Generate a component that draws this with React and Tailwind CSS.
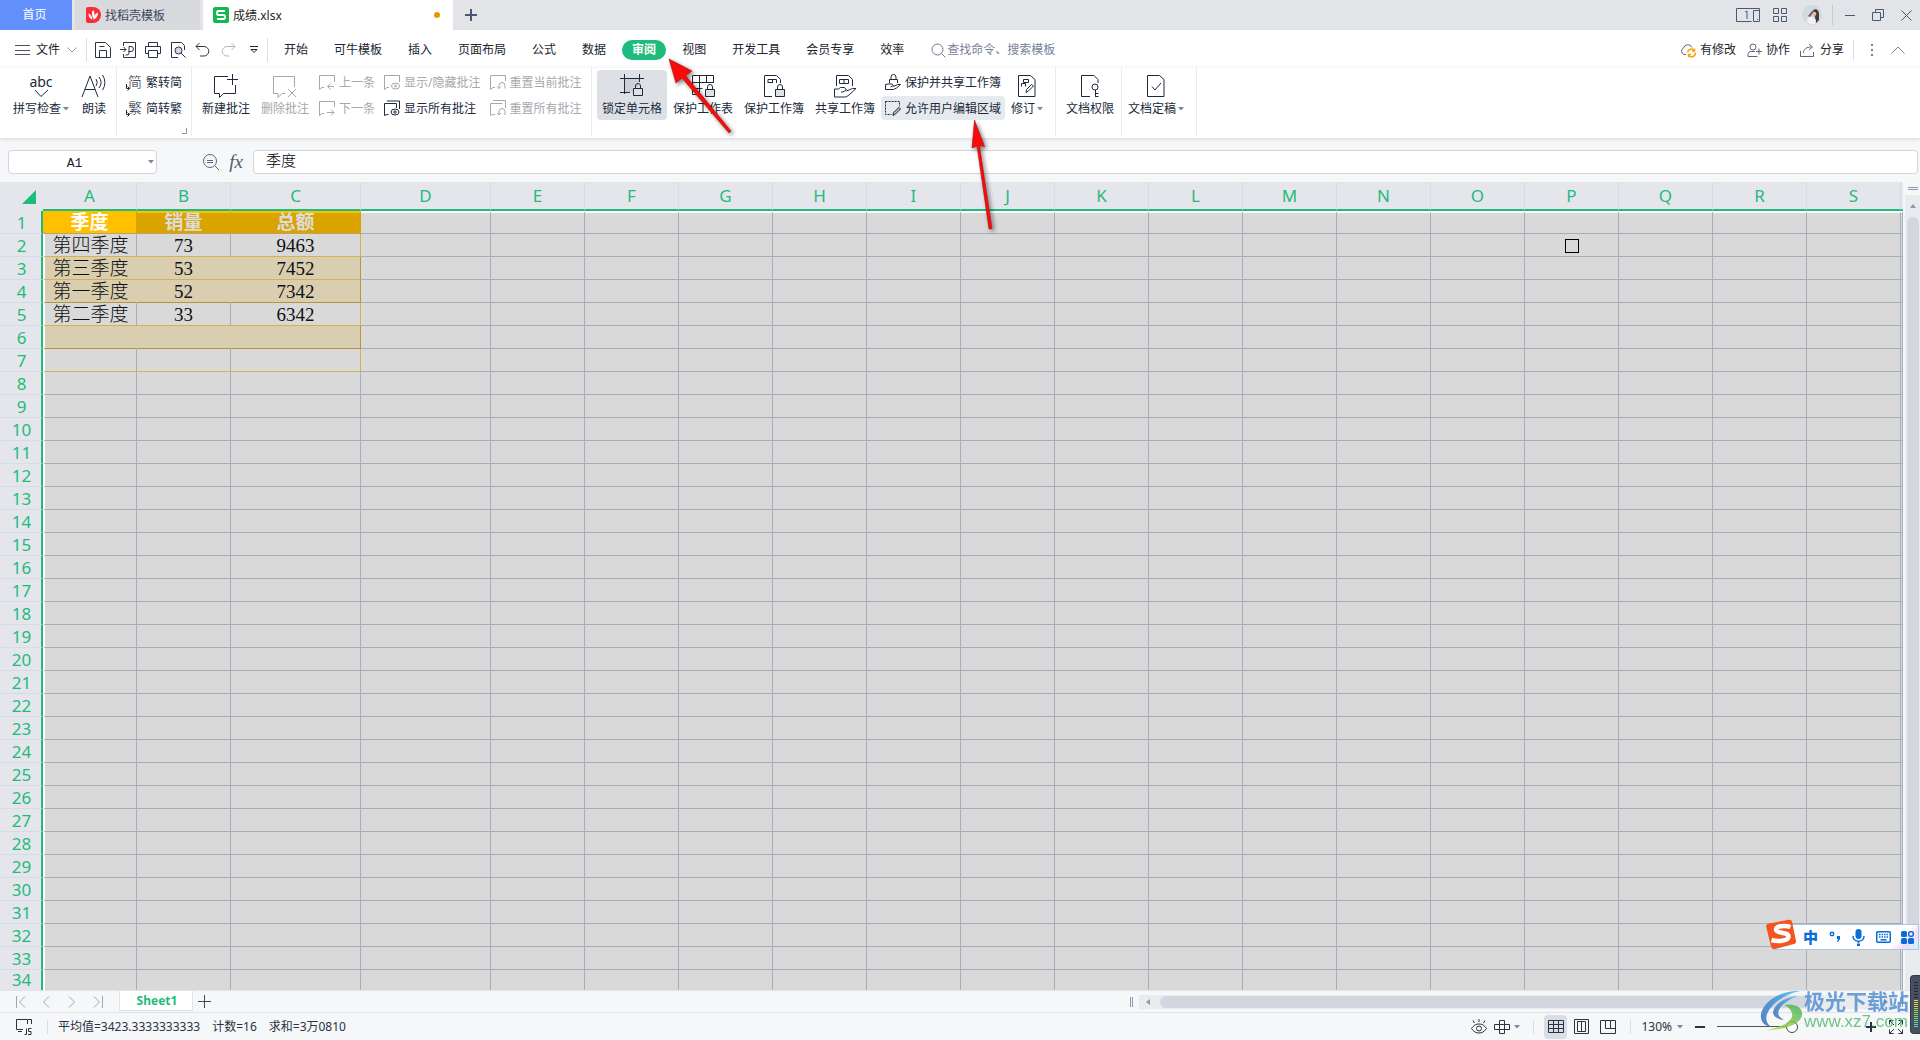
import React from "react";

const UI = "font-['Noto_Sans','Noto_Sans_CJK_SC',sans-serif]";

function Icon({ w = 16, h = w, sw = 1, className = "", children }) {
  return (
    <svg width={w} height={h} viewBox={`0 0 ${w} ${h}`} fill="none" stroke="currentColor" strokeWidth={sw} className={`shrink-0 ${className}`} aria-hidden="true">
      {children}
    </svg>
  );
}

function Caret() {
  return (
    <svg width="6" height="4" viewBox="0 0 6 4" className="shrink-0 fill-[#7b86a0]" aria-hidden="true">
      <path d="M0 0h6L3 3.5z" />
    </svg>
  );
}

/* ---------- title bar ---------- */

function TitleBar() {
  return (
    <header className="flex h-[30px] shrink-0 items-stretch bg-[#e2e4e8] text-xs text-[#3d4760]">
      <button className="mr-[3px] w-[72px] bg-[#618ffb] pr-[3px] text-white">首页</button>
      <button className="mr-[3px] flex w-[125px] items-center gap-1 bg-[#d8dadd] pl-[11px]">
        <svg width="15" height="16" viewBox="0 0 15 16" aria-hidden="true">
          <path d="M2 0h5a8 8 0 0 1 0 16H2a2 2 0 0 1-2-2V2a2 2 0 0 1 2-2z" fill="#f92c3a" />
          <path d="M7 3c2 2 2 5 .3 8.500C5.500 8.500 5.500 5 7 3zM2.500 6.500c2 .5 3.500 2.500 4 6C4 12 2.500 9.500 2.500 6.500zM12 5.500c0 3-1.300 6-4.600 7 .1-3 2-6 4.600-7z" fill="#fff" />
        </svg>
        <span className="pt-0.5">找稻壳模板</span>
      </button>
      <button className="flex w-[250px] items-center gap-1 bg-white pl-[10px] pr-[13px] text-[#1a1d24]">
        <svg width="16" height="16" viewBox="0 0 16 16" aria-hidden="true">
          <rect width="16" height="16" rx="2" fill="#12b84e" />
          <path d="M12 4H5.500C4.300 4 4 4.800 4 6s.5 1.900 1.500 1.900h5c1.100 0 1.500.7 1.500 1.900s-.5 2.200-1.500 2.200H4" fill="none" stroke="#fff" strokeWidth="2" />
        </svg>
        <span className="pt-0.5">成绩.xlsx</span>
        <span className="ml-auto size-[6px] rounded-full bg-[#e79a00]" />
      </button>
      <button aria-label="新建标签" className="flex w-9 items-center justify-center text-[#4a5878]">
        <Icon w={12} sw={2}><path d="M6 0v12M0 6h12" /></Icon>
      </button>
      <div className="ml-auto flex items-center text-[#4a5878]">
        <button aria-label="窗口" className="mr-[13px]">
          <Icon w={24} h={14} sw={1}>
            <path d="M15.500 13.500H.5V.5h23v2M23.500 2.500h-6v11h6zM9 4l2-1v8M21 11.500h1" />
          </Icon>
        </button>
        <button aria-label="应用" className="mr-[15px]">
          <Icon w={14}><path d="M.5.5h5v5h-5zM8.500.5h5v5h-5zM.5 8.500h5v5h-5zM8.500 8.500h5v5h-5z" /></Icon>
        </button>
        <button aria-label="账户" className="mr-[10px]">
          <svg width="20" height="20" viewBox="0 0 20 20" aria-hidden="true">
            <circle cx="10" cy="10" r="10" fill="#cfdbe1" />
            <path d="M11 5c3-2 6 0 6 4l0 6-3 3-1-6z" fill="#4b363c" />
            <path d="M11 7c2-1 4 0 3 3l-2 2-2-2z" fill="#e3b7a4" />
            <path d="M5 17c0-4 2-6 5-5l4 3-1 4-5 0z" fill="#eef4f6" />
            <path d="M6 11l4-5 2 0-4 6z" fill="#6d5a60" />
          </svg>
        </button>
        <span className="mr-[12px] h-5 w-px bg-[#c6c9d0]" />
        <button aria-label="最小化" className="mr-[17px]"><Icon w={10} h={12}><path d="M0 6.500h10" /></Icon></button>
        <button aria-label="还原" className="mr-[17px]"><Icon w={12}><path d="M.5 3.500h8v8h-8zM3.500 3.500v-3h8v8h-3" /></Icon></button>
        <button aria-label="关闭" className="mr-[8px]"><Icon w={11}><path d="M.5.5l10 10M10.500.5l-10 10" /></Icon></button>
      </div>
    </header>
  );
}

/* ---------- menu row ---------- */

const MENUS = ["开始", "可牛模板", "插入", "页面布局", "公式", "数据", "审阅", "视图", "开发工具", "会员专享", "效率"];

function MenuRow() {
  return (
    <nav className="flex h-[38px] shrink-0 items-center bg-white pt-0.5 text-xs text-[#20242e]">
      <button className="ml-[15px] flex items-center text-[#20242e]">
        <Icon w={15} h={10} className="mr-[6px] text-[#4b5261]"><path d="M0 .5h15M0 5.500h15M0 9.500h15" /></Icon>
        文件
        <Icon w={10} h={6} className="ml-[7px] text-[#989dab]"><path d="M.5.5l4.500 4.500L9.500.5" /></Icon>
      </button>
      <span className="ml-[9px] h-6 w-px bg-[#dcdee3]" />
      <div className="ml-[8px] flex items-center gap-[9px] text-[#2a3346]">
        <button aria-label="保存"><Icon><path d="M.5 15.500V.5h10l5 5v10zM4.500 15v-6.500h7V15M4.500 4.500h5" /></Icon></button>
        <button aria-label="输出为PDF"><Icon><path d="M3.500 4V.5h12v15h-12V12M0 7.500h6M3.500 5L6 7.500 3.500 10M9 4.500h2a2 2 0 0 1 0 5H8.500M9 4.500V11a2 2 0 0 1-2 2H5.500" /></Icon></button>
        <button aria-label="打印"><Icon><path d="M3.500 4.500v-4h9v4M3.500 11.500h-3v-7h15v7h-3M3.500 8.500h9v7h-9z" /></Icon></button>
        <button aria-label="打印预览"><Icon><path d="M8 15.500H1.500V.5h10l3 3V8" /><circle cx="8.500" cy="8.500" r="3.500" fill="#d5d9e2" /><path d="M11 11l4.500 4.500" /></Icon></button>
        <button aria-label="撤消"><Icon><path d="M4.500 1L1 4.500 4.500 8M1 4.500h8a4.700 4.700 0 0 1 0 9.500H5" /></Icon></button>
        <button aria-label="恢复" className="text-[#b3b7c0]"><Icon><path d="M11.500 1L15 4.500 11.500 8M15 4.500H7A4.700 4.700 0 0 0 7 14h2" /></Icon></button>
      </div>
      <button aria-label="更多" className="ml-[14px]"><Icon w={8} h={8}><path d="M0 .5h8M1 3.500h6L4 6.500z" /></Icon></button>
      <span className="ml-[9px] h-6 w-px bg-[#dcdee3]" />
      <div className="ml-[3px] flex items-center">
        {MENUS.map((m) => (
          <button
            key={m}
            className={
              m === "审阅"
                ? "mx-[3px] h-5 rounded-full bg-[#1fbb7d] px-[10px] font-bold text-white"
                : "mx-[3px] h-5 px-[10px]"
            }
          >
            {m}
          </button>
        ))}
      </div>
      <label className="ml-[14px] flex items-center gap-px text-[#6f7a94]">
        <Icon w={15}><circle cx="6.500" cy="6.500" r="5.500" /><path d="M10.500 10.500l4 4" /></Icon>
        <input className="w-32 bg-transparent outline-none placeholder:text-[#76819b]" placeholder="查找命令、搜索模板" aria-label="查找命令、搜索模板" />
      </label>
      <div className="ml-auto flex items-center">
        <button className="flex items-center gap-1">
          <Icon w={16} className="text-[#5c6577]">
            <path d="M6 12.500H4a3.500 3.500 0 0 1-.5-6.500A4.500 4.500 0 0 1 12 5.500" />
            <path d="M7.500 10.500a4 4 0 0 1 7-2M15.500 10.500a4 4 0 0 1-7 3M14.500 6.500v2.500H12M8.500 15v-2.500H11" stroke="#f5a30b" strokeWidth="1.500" />
          </Icon>
          有修改
        </button>
        <button className="ml-[11px] flex items-center gap-[4px]">
          <Icon w={15} className="text-[#5c6577]"><circle cx="6" cy="4" r="3" /><path d="M10.500 13.500H1v-2c0-2 1.500-3 3-3h4M12 5.500v6M9 8.500h6" /></Icon>
          协作
        </button>
        <button className="ml-[10px] flex items-center gap-[5px]">
          <Icon w={15} className="text-[#5c6577]"><path d="M.5 8v5.500h13V9M3.500 10c0-4 3-6 8-6M9 1l3.500 3L9 7" /></Icon>
          分享
        </button>
        <span className="ml-[9px] h-5 w-px bg-[#dcdee3]" />
        <button aria-label="更多选项" className="ml-[17px] flex flex-col gap-[3px]">
          <span className="size-[2px] bg-[#7d828e]" /><span className="size-[2px] bg-[#7d828e]" /><span className="size-[2px] bg-[#7d828e]" />
        </button>
        <button aria-label="收起功能区" className="ml-[18px] mr-[15px] text-[#7d828e]"><Icon w={14} h={8}><path d="M.5 7.500L7 1l6.500 6.500" /></Icon></button>
      </div>
    </nav>
  );
}

/* ---------- ribbon ---------- */

function Big({ icon, label, caret, off, on }) {
  return (
    <button
      className={`flex h-[50px] shrink-0 flex-col items-center rounded-sm px-[5px] pt-[3px] ${on ? "bg-[#dde1e6]" : ""} ${off ? "text-[#a5a8ad]" : "text-[#20293b]"}`}
    >
      <span className="flex h-[26px] items-center">{icon}</span>
      <span className="flex items-center gap-[2px] leading-5">
        {label}
        {caret && <Caret />}
      </span>
    </button>
  );
}

function Small({ icon, label, off, on }) {
  return (
    <button
      className={`flex h-6 items-center gap-1 rounded-sm px-1 ${on ? "bg-[#e6e9ee]" : ""} ${off ? "text-[#a5a8ad]" : "text-[#20293b]"}`}
    >
      {icon}
      <span className="pt-0.5">{label}</span>
    </button>
  );
}

const Col = ({ children }) => <div className="flex shrink-0 flex-col gap-0.5">{children}</div>;

const Group = ({ className, children }) => (
  <div className={`flex h-[68px] shrink-0 items-start border-r border-[#e8eaed] pt-[2px] ${className}`}>{children}</div>
);

const Lock = ({ x, y }) => (
  <g transform={`translate(${x} ${y})`}>
    <path d="M.5 5.500h9v7h-9z" fill="#dfe1e5" />
    <path d="M2.500 5.500V3a2.500 2.500 0 0 1 5 0v2.500" />
  </g>
);

/* A character with a small conversion arrow at its lower left */
const Glyph = ({ c }) => (
  <span className="flex w-4 items-end">
    <Icon w={4} h={7} className="z-10 -mr-[2px]"><path d="M.5 0v4.500H3M1.500 2.500l2 2-2 2" /></Icon>
    <span className="text-[14px] font-light leading-[18px]">{c}</span>
  </span>
);

function Ribbon() {
  return (
    <section aria-label="审阅" className="z-10 flex h-[70px] shrink-0 bg-white text-xs shadow-[0_1px_4px_rgba(0,0,0,0.14)]">
      <Group className="w-[117px] gap-[2px] pl-2">
        <Big
          label="拼写检查"
          caret
          icon={
            <span className="flex flex-col items-center">
              <span className="text-[14px] leading-[14px]">abc</span>
              <Icon w={15} h={9}><path d="M1 1l6 6.500L14 1" /></Icon>
            </span>
          }
        />
        <Big
          label="朗读"
          icon={<Icon w={26} h={24}><path d="M1 23L9 2l8 21M4 15.500h10M15 5a6 6 0 0 1 0 7M18 3a9 9 0 0 1 0 11M21.500 1a13 13 0 0 1 0 15" /></Icon>}
        />
      </Group>
      <Group className="w-[75px] pl-[5px]">
        <Col>
          <Small label="繁转简" icon={<Glyph c="简" />} />
          <Small label="简转繁" icon={<Glyph c="繁" />} />
        </Col>
        <button aria-label="对话框启动器" className="-ml-1 self-end pb-[2px] text-[#8e95a5]"><Icon w={5} h={6}><path d="M4.500 0v5.500H0" /></Icon></button>
      </Group>
      <Group className="w-[400px] gap-px pl-[5px]">
        <Big label="新建批注" icon={<Icon w={24}><path d="M14 2.500H.5v17h5v4l4-4h12V11M18.500 0v11M13 5.500h11" /></Icon>} />
        <Big label="删除批注" off icon={<Icon w={24}><path d="M12 19.500H9l-4 4v-4H.5v-17h21V13M15 15l8 8M23 15l-8 8" /></Icon>} />
        <Col>
          <Small off label="上一条" icon={<Icon><path d="M5 13.500H3L.5 15.500V1.500h15V8M15 12.500H9M11.500 9.500l-3 3 3 3" /></Icon>} />
          <Small off label="下一条" icon={<Icon><path d="M5 13.500H3L.5 15.500V1.500h15V7M8 12.500h7M12 9.500l3 3-3 3" /></Icon>} />
        </Col>
        <Col>
          <Small off label="显示/隐藏批注" icon={<Icon><path d="M5 13.500H3L.5 15.500V1.500h15V8" /><ellipse cx="11.500" cy="12" rx="4" ry="3" /><circle cx="11.500" cy="12" r="1" /></Icon>} />
          <Small label="显示所有批注" icon={<Icon><path d="M4.500 14.500H3l-2.500 1V3.500h12V8M3 1h12.500v8" /><ellipse cx="11" cy="12" rx="4" ry="3" /><circle cx="11" cy="12" r="1.200" /></Icon>} />
        </Col>
        <Col>
          <Small off label="重置当前批注" icon={<Icon><path d="M5 13.500H3L.5 15.500V1.500h15V7M9 14.500v-3a3 3 0 0 1 6 0v3M7 12.500l2 2 2-2" /></Icon>} />
          <Small off label="重置所有批注" icon={<Icon><path d="M5 14.500H3l-2.500 1V3.500h12M3 .5h12.500V8M9 15v-3.500a3 3 0 0 1 6 0V15M7 13l2 2 2-2" /></Icon>} />
        </Col>
      </Group>
      <Group className="w-[464px] gap-px pl-[5px]">
        <Big on label="锁定单元格" icon={<Icon w={24}><path d="M5 5h14v8h-6v5H5z" fill="#cdd1d7" stroke="none" /><path d="M4.500 0v20M19.500 0v8M0 4.500h24M0 18.500h10" /><Lock x={13} y={9} /></Icon>} />
        <Big label="保护工作表" icon={<Icon w={24}><path d="M10 20.500H1.500v-19h21V9M1.500 8.500h21M8.500 1.500v19M15.500 1.500v7M1.500 14.500h10" /><Lock x={14} y={10} /></Icon>} />
        <Big label="保护工作簿" icon={<Icon w={22} h={24}><path d="M9 22.500H1.500V1.500h12l4 4V9M5 9V5.500h8.500V9M5 8.500h5M9.500 5.500v3" /><Lock x={12} y={10} /></Icon>} />
        <Big
          label="共享工作簿"
          icon={
            <Icon w={24}>
              <path d="M3.500 12V1.500h12l4 4V12M6.500 5.500h9v4h-9zM11 5.500v4" />
              <path d="M1.500 23V15h4l2-1.500h4l2 2.500-3.500 2H8M13.500 17l6-2.500h3.500L16 21l-3 2H1.500" />
            </Icon>
          }
        />
        <Col>
          <Small label="保护并共享工作簿" icon={<Icon><path d="M4.500 9V5.500h8V9M6 5.500V3a2.500 2.500 0 0 1 5 0v2.500M.5 15.500V10.500l2.500-.5h4l1.500 1.500-3 1.500M8.500 12.500l4-2h3L11.500 14l-3 1.500h-8" /></Icon>} />
          <Small on label="允许用户编辑区域" icon={<Icon><path d="M.5 1.500h14v5M.5 1.500v13h6" strokeDasharray="2 1" /><path d="M8 15.500l.5-3L14 7.500l1.500 1.500-5 5z" fill="#b9bec8" /></Icon>} />
        </Col>
        <Big label="修订" caret icon={<Icon w={20} h={24}><path d="M1.500 1.500h12l4.500 4v17H1.500zM6.500 5.500h5v3h-5zM4.500 12.500v-3h4v3M9 18.500l.5-3 5-5 2 1.500-5 5z" /></Icon>} />
      </Group>
      <Group className="w-[66px] pl-[5px]">
        <Big label="文档权限" icon={<Icon w={20} h={24}><path d="M10 22.500H1.500V1.500H14l4 4V9" /><circle cx="15" cy="13" r="3" /><path d="M15.500 16v7M15.500 19.500h3M15.500 22.500h3" /></Icon>} />
      </Group>
      <Group className="w-[75px] pl-px">
        <Big label="文档定稿" caret icon={<Icon w={20} h={24}><path d="M1.500 1.500h12l4.500 4v17H1.500zM6 12.500l3 3.500 6-7" /></Icon>} />
      </Group>
    </section>
  );
}

/* ---------- formula bar ---------- */

function FormulaBar() {
  return (
    <div className="flex h-11 shrink-0 items-center bg-[#f5f7f9] pl-2 pr-[2px] pt-[3px]">
      <div className="flex h-6 w-[149px] items-center rounded-sm border border-[#d2d5dc] bg-white pr-[2px]">
        <input aria-label="名称框" defaultValue="A1" className="w-full min-w-0 bg-transparent pr-2 pt-1 text-center font-['Liberation_Mono',monospace] text-[13px] leading-none text-[#20242e] outline-none" />
        <button aria-label="名称列表"><Caret /></button>
      </div>
      <button aria-label="查找" className="ml-[45px] text-[#5b6680]">
        <Icon w={18}><circle cx="8" cy="8" r="6.500" /><path d="M13 13l4 4M5 7.500h6M5 9.500h6" /></Icon>
      </button>
      <button className="ml-[8px] w-4 font-['Liberation_Serif',serif] text-[19px] italic leading-none text-[#4f5a72]">fx</button>
      <input
        aria-label="编辑栏"
        defaultValue="季度"
        className="ml-[9px] h-6 min-w-0 flex-1 rounded-sm border border-[#d2d5dc] bg-white px-3 pb-1 text-[15px] font-light text-black outline-none"
      />
    </div>
  );
}

/* ---------- sheet ---------- */

const LETTERS = "ABCDEFGHIJKLMNOPQRS".split("");
const ROWS = 34;
const DATA = [
  ["季度", "销量", "总额"],
  ["第四季度", "73", "9463"],
  ["第三季度", "53", "7452"],
  ["第一季度", "52", "7342"],
  ["第二季度", "33", "6342"],
  ["", "", ""],
  ["", "", ""],
];

const BAND = "bg-[#d9ceaf]";
const PLAIN = "bg-[#d9d9d9]";
const HEAD = "bg-[#d9a300] border-b-[#c0a258] border-r-[#d9a300] font-semibold text-[#dcdcdc]";

const STYLES = [
  [
    "bg-[#ffc000] border-b-[#c0a258] border-r-[#d9a300] font-semibold text-white pt-0.5",
    HEAD + " border-t-2 border-t-[#ffc000]",
    HEAD + " border-t-2 border-t-[#ffc000]",
  ],
  [PLAIN + " border-b-[#d6b150] border-r-[#a6adbd]", PLAIN + " border-b-[#d6b150] border-r-[#a6adbd]", PLAIN + " border-b-[#d6b150] border-r-[#d6b150]"],
  [BAND + " border-b-[#d6b150] border-r-[#d9ceaf]", BAND + " border-b-[#d6b150] border-r-[#d9ceaf]", BAND + " border-b-[#d6b150] border-r-[#b5963f]"],
  [BAND + " border-b-[#b5963f] border-r-[#d9ceaf]", BAND + " border-b-[#b5963f] border-r-[#d9ceaf]", BAND + " border-b-[#b5963f] border-r-[#b5963f]"],
  [PLAIN + " border-b-[#d6b150] border-r-[#a6adbd]", PLAIN + " border-b-[#d6b150] border-r-[#a6adbd]", PLAIN + " border-b-[#d6b150] border-r-[#d6b150]"],
  [BAND + " border-b-[#b5963f] border-r-[#d9ceaf]", BAND + " border-b-[#b5963f] border-r-[#d9ceaf]", BAND + " border-b-[#b5963f] border-r-[#b5963f]"],
  [PLAIN + " border-b-[#d6b150] border-r-[#a6adbd]", PLAIN + " border-b-[#d6b150] border-r-[#a6adbd]", PLAIN + " border-b-[#d6b150] border-r-[#d6b150]"],
];

function cellClass(r, c) {
  let s = "border-r px-0 pb-0 text-center align-middle ";
  s += r === ROWS - 1 ? "h-5 " : "h-[23px] border-b ";
  if (r > 0 && r < 7 && r !== 0) s += "pt-0.5 ";
  else if (!(r === 0 && c === 0)) s += "pt-0 ";
  s += r < 7 && c < 3 ? STYLES[r][c] : PLAIN + " border-b-[#a6adbd] border-r-[#a6adbd]";
  if (r === 0 && c > 2) s += " border-t-2 border-t-white";
  if (c === 0 && r > 0) s += " border-l-2 border-l-white";
  return s;
}

function Sheet() {
  return (
    <div className="min-w-0 flex-1 overflow-hidden">
      <table className="w-full table-fixed border-separate border-spacing-0 bg-[#e4e6eb] font-['Liberation_Serif','Noto_Sans_CJK_SC',serif] text-[19px] font-light leading-5 text-[#111]">
        <colgroup>
          <col className="w-[43px]" />
          {LETTERS.map((l) => (
            <col key={l} className={l === "C" || l === "D" ? "w-[130px]" : "w-[94px]"} />
          ))}
          <col />
        </colgroup>
        <thead>
          <tr className="font-['Noto_Sans',sans-serif] text-[17px] text-[#1fbb7d]">
            <th className="h-[29px] p-0">
              <svg width="14" height="14" viewBox="0 0 14 14" className="ml-[22px] fill-[#1fbb7d]" aria-label="全选" role="img"><path d="M14 0v14H0z" /></svg>
            </th>
            {LETTERS.map((l) => (
              <th key={l} scope="col" className="h-[29px] border-b-2 border-r border-b-[#1fbb7d] border-r-[#d5dbe8] p-0 font-normal">{l}</th>
            ))}
            <th className="h-[29px] border-b-2 border-b-[#1fbb7d] p-0" />
          </tr>
        </thead>
        <tbody>
          {Array.from({ length: ROWS }, (_, r) => (
            <tr key={r}>
              <th
                scope="row"
                className={`border-r-2 border-b-[#d5dbe8] border-r-[#1fbb7d] pb-0 pl-0.5 pr-0 font-['Noto_Sans',sans-serif] text-[17px] font-normal text-[#1fbb7d] ${r === ROWS - 1 ? "h-5 pt-0" : "h-[23px] border-b pt-0.5"}`}
              >
                {r + 1}
              </th>
              {Array.from({ length: 20 }, (_, c) => (
                <td key={c} className={cellClass(r, c)}>
                  {r < 7 && c < 3 ? DATA[r][c] : null}
                  {r === 1 && c === 15 ? <span className="mx-auto block size-[14px] border border-black" /> : null}
                </td>
              ))}
            </tr>
          ))}
        </tbody>
      </table>
    </div>
  );
}

function VerticalScroll() {
  return (
    <div className="flex w-[17px] shrink-0 flex-col items-center border-l-2 border-[#f5f7f9] bg-[#e9ebef]">
      <div className="flex h-[13px] w-full flex-col items-center justify-center gap-px bg-[#f5f7f9]">
        <span className="h-px w-[10px] bg-[#8c99b5]" /><span className="h-px w-[10px] bg-[#8c99b5]" />
      </div>
      <button aria-label="向上滚动" className="flex h-[22px] items-center"><svg width="6" height="4" viewBox="0 0 6 4" className="fill-[#8c99b5]"><path d="M0 4h6L3 0z" /></svg></button>
      <div className="w-3 flex-1 rounded-full bg-[#d3d6df]" />
      <div className="h-[50px]" />
    </div>
  );
}

/* ---------- bottom bars ---------- */

function SheetTabs() {
  return (
    <div className="flex h-[22px] shrink-0 items-center border-t border-[#e2e4e9] bg-[#f5f7f9] text-[#a3a7b0]">
      <button aria-label="第一张" className="ml-4"><Icon w={10} h={12}><path d="M.5 0v12M9 .5L3.500 6 9 11.500" /></Icon></button>
      <button aria-label="上一张" className="ml-[16px]"><Icon w={8} h={12}><path d="M7 .5L1.500 6 7 11.500" /></Icon></button>
      <button aria-label="下一张" className="ml-[18px]"><Icon w={8} h={12}><path d="M1 .5L6.500 6 1 11.500" /></Icon></button>
      <button aria-label="最后一张" className="ml-[17px]"><Icon w={10} h={12}><path d="M9.500 0v12M1 .5L6.500 6 1 11.500" /></Icon></button>
      <button className="ml-4 h-5 w-[74px] self-start border-x border-b border-[#dfe2e8] bg-white pl-0.5 text-xs font-bold text-[#1fbb7d]">Sheet1</button>
      <button aria-label="新建工作表" className="ml-[5px] text-[#3f4a61]"><Icon w={13}><path d="M6.500 0v13M0 6.500h13" /></Icon></button>
      <div className="ml-auto flex h-full w-[calc(41%+3px)] items-center pr-[17px]">
        <span className="mr-[6px] h-[10px] w-[3px] border-x border-[#8c99b5]" />
        <div className="flex h-[14px] min-w-0 flex-1 items-center bg-[#e9ebef]">
          <button aria-label="向左滚动" className="w-[21px] pl-[7px]"><svg width="4" height="6" viewBox="0 0 4 6" className="fill-[#8c99b5]"><path d="M4 0v6L0 3z" /></svg></button>
          <div className="h-3 flex-1 rounded-full bg-[#d3d6df]" />
          <button aria-label="向右滚动" className="w-[85px] pl-[75px]"><svg width="4" height="6" viewBox="0 0 4 6" className="fill-[#8c99b5]"><path d="M0 0v6l4-3z" /></svg></button>
        </div>
        <span className="ml-[6px] h-[10px] w-[3px] border-x border-[#8c99b5]" />
      </div>
    </div>
  );
}

function StatusBar() {
  return (
    <footer className="flex h-7 shrink-0 items-center border-t border-[#e2e4e9] bg-[#f5f7f9] text-xs text-[#2b3242]">
      <button aria-label="脚本" className="ml-4">
        <Icon w={16}><path d="M11 .5H.5v10H7M2 12.500h4M11.500 5V.5h4V5M8.500 15.500h2v-6M15.500 9.500h-3v3h2.500v3h-3" /></Icon>
      </button>
      <span className="ml-[15px] h-3.5 w-px bg-[#dcdee3]" />
      <p className="ml-[10px] flex gap-3"><span>平均值=3423.3333333333</span><span>计数=16</span><span>求和=3万0810</span></p>
      <div className="ml-auto flex items-center">
        <button aria-label="护眼模式"><Icon w={16}><path d="M.5 9.500C3 6 5 5 8 5s5 1 7.500 4.500C13 13 11 14 8 14s-5-1-7.500-4.500zM8 3V0M3.500 4L2 1.500M12.500 4L14 1.500" /><circle cx="8" cy="9.500" r="2.500" /></Icon></button>
        <button aria-label="阅读模式" className="ml-[7px] flex items-center gap-1"><Icon w={16} h={14}><path d="M5.500.5h5v13h-5zM.5 4.500h15v5H.5z" /></Icon><Caret /></button>
        <span className="ml-[13px] h-3.5 w-px bg-[#dcdee3]" />
        <button aria-label="普通视图" className="ml-[10px] flex h-6 w-[23px] items-center justify-center rounded-sm bg-[#d9dde5]"><Icon w={16} h={13}><path d="M.5.5h15v12H.5zM.5 4.500h15M.5 8.500h15M5.500.5v12M10.500.5v12" /></Icon></button>
        <button aria-label="页面布局视图" className="ml-[7px]"><Icon w={15} h={15}><path d="M.5.5h14v14H.5zM3.500 2.500h8v10h-8zM7.500 2.500v10" /></Icon></button>
        <button aria-label="分页预览" className="ml-[11px]"><Icon w={16} h={14}><path d="M.5.5h15v13H.5zM5.500.5v8h10M10.500.5v8" /></Icon></button>
        <span className="ml-[14px] h-3.5 w-px bg-[#dcdee3]" />
        <button className="ml-[10px] flex items-center gap-[5px]"><span>130%</span><Caret /></button>
        <button aria-label="缩小" className="ml-[12px]"><Icon w={10} sw={2}><path d="M0 5h10" /></Icon></button>
        <input
          type="range"
          aria-label="显示比例"
          min="0"
          max="100"
          defaultValue="55"
          className="ml-[12px] h-3 w-[138px] appearance-none bg-[linear-gradient(#4b5367,#4b5367)] bg-[length:70px_1px] bg-left bg-no-repeat [&::-webkit-slider-thumb]:size-3 [&::-webkit-slider-thumb]:appearance-none [&::-webkit-slider-thumb]:rounded-full [&::-webkit-slider-thumb]:border [&::-webkit-slider-thumb]:border-[#3f4759] [&::-webkit-slider-thumb]:bg-white"
        />
        <button aria-label="放大" className="ml-[11px]"><Icon w={10} sw={2}><path d="M5 0v10M0 5h10" /></Icon></button>
        <button aria-label="全屏" className="ml-[13px] mr-[17px]"><Icon w={14}><path d="M.5 4.500v-4h4M9.500.5h4v4M13.500 9.500v4h-4M4.500 13.500h-4v-4M.5.5l4.500 4.500M13.500.5L9 5M13.500 13.500L9 9M.5 13.500L5 9" /></Icon></button>
      </div>
    </footer>
  );
}

/* ---------- floating layers ---------- */

function InputMethodBar() {
  return (
    <div className="absolute bottom-[90px] right-px z-20 flex h-[26px] w-[146px] items-center border border-[#a9c6e8] bg-white bg-[linear-gradient(135deg,transparent_82%,#f8dcf5_90%,#c8f6f6)] text-[#0a6cd6]">
      <svg width="32" height="32" viewBox="0 0 32 32" className="-ml-[9px] -mt-[4px] shrink-0" aria-hidden="true">
        <path d="M4 4.500L24 .8q2.500-.4 3 2L31 22q.4 2.500-2 3L10 30q-3 .5-3.800-2L1.200 8Q.8 5 4 4.500z" fill="#f4541d" />
        <path d="M25.500 8C20 6 11 7 11 10.500 11 15 23.500 12.500 23.500 17.500 23.500 22 13 23 6.500 21" fill="none" stroke="#fff" strokeWidth="4.500" />
      </svg>
      <button className="ml-[6px] text-[15px] font-black leading-none">中</button>
      <button aria-label="标点" className="ml-[11px]">
        <svg width="12" height="12" viewBox="0 0 12 12"><circle cx="3" cy="3" r="1.700" fill="none" stroke="currentColor" strokeWidth="1.500" /><path d="M8 5h3v3l-2 3H8l1-3H8z" fill="currentColor" /></svg>
      </button>
      <button aria-label="语音" className="ml-[11px]">
        <svg width="13" height="17" viewBox="0 0 13 17"><rect x="3.500" y="0" width="6" height="10" rx="3" fill="currentColor" /><path d="M1 7c0 7 11 7 11 0M6.500 13v1" fill="none" stroke="currentColor" strokeWidth="1.500" /><path d="M5 14.500h3V17H5z" fill="currentColor" /></svg>
      </button>
      <button aria-label="软键盘" className="ml-[11px]">
        <svg width="15" height="12" viewBox="0 0 15 12" fill="none" stroke="currentColor"><rect x=".75" y=".75" width="13.500" height="10.500" rx="1" strokeWidth="1.500" /><path d="M3 3.500h9M3 6h9" strokeWidth="1.500" strokeDasharray="1.500 1" /><path d="M4.500 8.800h6" strokeWidth="1.500" /></svg>
      </button>
      <button aria-label="工具箱" className="ml-[10px]">
        <svg width="13" height="13" viewBox="0 0 13 13" fill="currentColor"><rect width="6" height="6" rx="1.500" /><rect y="7" width="6" height="6" rx="1.500" /><rect x="7" y="7" width="6" height="6" rx="1.500" /><rect x="7.750" y=".75" width="4.500" height="4.500" rx="1.500" fill="none" stroke="currentColor" strokeWidth="1.500" /></svg>
      </button>
    </div>
  );
}

function Watermark() {
  return (
    <div className="pointer-events-none absolute bottom-[8px] right-[11px] z-20 flex items-center opacity-80">
      <svg width="44" height="42" viewBox="0 0 44 42" aria-hidden="true">
        <defs>
          <linearGradient id="wm-blue" x1="0" y1="1" x2="1" y2="0"><stop offset="0" stopColor="#2b62b5" /><stop offset="1" stopColor="#43b5ea" /></linearGradient>
          <linearGradient id="wm-green" x1="0" y1="1" x2="1" y2="0"><stop offset="0" stopColor="#c9e04a" /><stop offset="1" stopColor="#35ad4f" /></linearGradient>
        </defs>
        <path d="M40 1C20 0 3 12 1 24c-1 8 4 12 10 13-5-4-6-9-3-15C13 12 26 4 40 1z" fill="url(#wm-blue)" />
        <path d="M38 6C24 7 14 15 13 22c0 5 5 7 11 8-5-3-7-6-5-10 3-6 10-11 19-14z" fill="url(#wm-blue)" />
        <path d="M24 15c10-2 19 2 18 10C41 34 24 41 5 40c12-2 24-6 27-13 1-5-2-9-8-12z" fill="url(#wm-green)" />
      </svg>
      <div className="flex flex-col items-start pt-px">
        <span className="text-[21px] font-bold leading-[22px] text-[#4a8bd0]">极光下载站</span>
        <span className="font-['Liberation_Sans',sans-serif] text-[17px] leading-5 text-[#4fb56d]">www.xz7.com</span>
      </div>
    </div>
  );
}

function LevelMeter() {
  return (
    <div className="absolute bottom-[6px] right-0 z-20 flex h-[59px] w-[10px] flex-col items-end rounded-l-sm border border-r-0 border-[#33384a] bg-[#4a4f60] pr-[2px] pt-[6px]">
      <span className="h-[18px] w-1 bg-[repeating-linear-gradient(#23273a_0_1px,transparent_1px_3px)]" />
      <span className="h-[28px] w-1 bg-[repeating-linear-gradient(transparent_0_1px,#4a4f60_1px_2px),linear-gradient(#f0d33c,#6fe06a,#45e0c8)]" />
    </div>
  );
}

function Arrows() {
  return (
    <>
      <svg width="76" height="88" viewBox="0 0 76 88" className="pointer-events-none absolute left-[664px] top-[54px] z-20 drop-shadow-[2px_2px_2px_rgba(0,0,0,0.5)]" aria-hidden="true">
        <path d="M5 5l23 12-6.500 4.500L67 77l-2 2-47-55-6 5z" fill="#fb0a0a" stroke="#a31212" strokeWidth=".6" />
      </svg>
      <svg width="36" height="122" viewBox="0 0 36 122" className="pointer-events-none absolute left-[964px] top-[114px] z-20 drop-shadow-[2px_2px_2px_rgba(0,0,0,0.5)]" aria-hidden="true">
        <path d="M10.500 6l10 26.500-5-1 12.500 83-3 .5-12-83-5 2z" fill="#fb0a0a" stroke="#a31212" strokeWidth=".6" />
      </svg>
    </>
  );
}

export default function App() {
  return (
    <div className={`relative flex h-screen w-full flex-col overflow-hidden bg-[#f5f7f9] ${UI}`}>
      <TitleBar />
      <MenuRow />
      <Ribbon />
      <FormulaBar />
      <main className="flex min-h-0 flex-1 overflow-hidden">
        <Sheet />
        <VerticalScroll />
      </main>
      <SheetTabs />
      <StatusBar />
      <Arrows />
      <InputMethodBar />
      <Watermark />
      <LevelMeter />
    </div>
  );
}
